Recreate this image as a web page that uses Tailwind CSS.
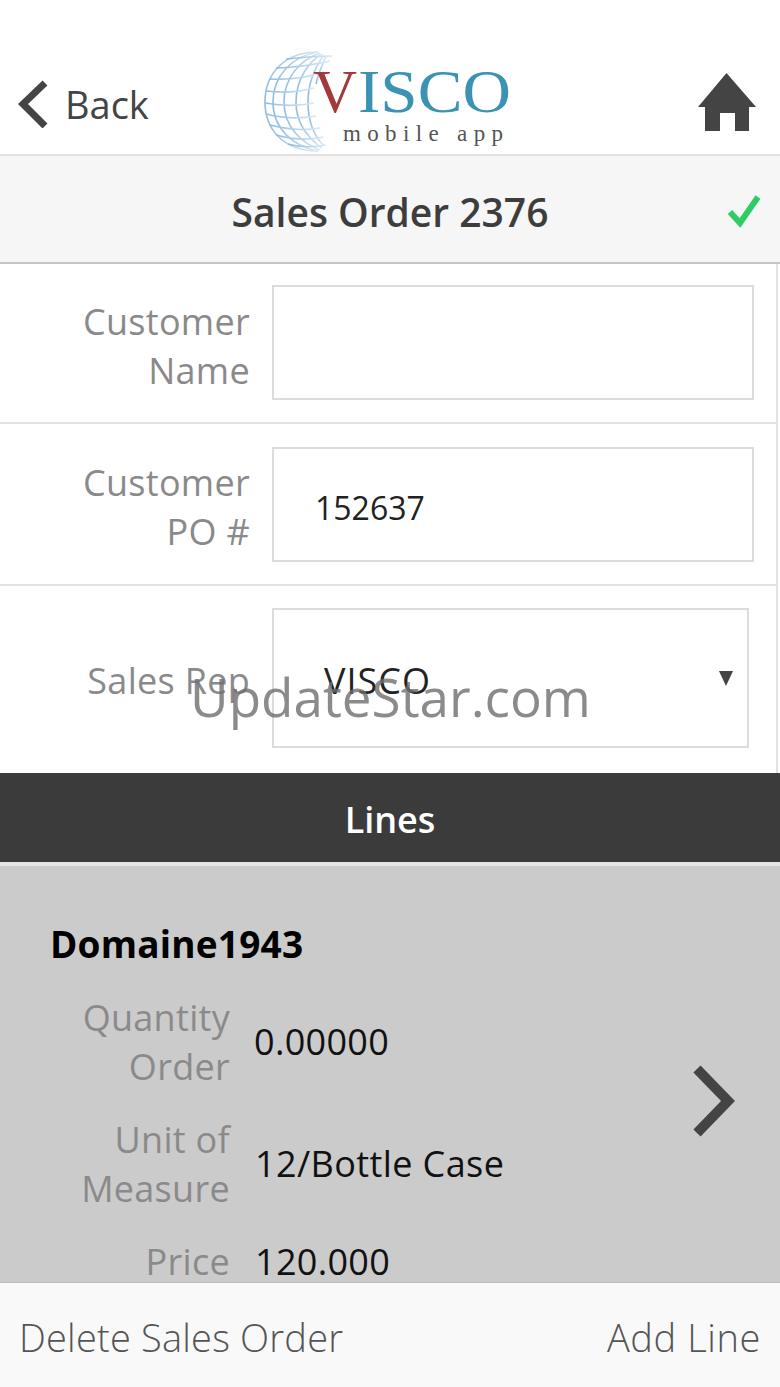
<!DOCTYPE html>
<html lang="en">
<head>
  <meta charset="UTF-8" />
  <title>Sales Order 2376</title>
  <script src="https://cdn.jsdelivr.net/npm/@tailwindcss/browser@4"></script>
</head>
<body class="bg-white font-['Open_Sans',sans-serif]">
<div class="relative w-[780px] h-[1387px] overflow-hidden flex flex-col">

  <!-- Header -->
  <div class="relative h-[156px] shrink-0 border-b-2 border-[#e2e2e2] bg-white">
    <div class="absolute left-[17px] top-[78px] flex items-center text-[#444]">
      <svg width="32" height="48" viewBox="0 0 32 48"><path d="M28 3 L6 24 L28 46" fill="none" stroke="#444" stroke-width="7"/></svg>
      <span class="ml-[16px] text-[38px] leading-[52px]">Back</span>
    </div>
    <svg class="absolute left-[262px] top-[48px]" width="252" height="106" viewBox="0 0 252 106">
      <defs>
        <linearGradient id="globe" x1="0" y1="0" x2="1" y2="0">
          <stop offset="0" stop-color="#8fbce0"/>
          <stop offset="1" stop-color="#dbe9f4"/>
        </linearGradient>
      </defs>
      <g fill="none" stroke="url(#globe)" stroke-width="1.6">
        <path d="M56 4 C22 4 3 26 3 54 C3 82 22 103 56 103"/>
        <path d="M56 4 C30 8 11 28 11 54 C11 80 30 98 56 103"/>
        <path d="M58 5 C38 12 22 30 22 54 C22 78 38 94 58 102"/>
        <path d="M60 6 C46 14 34 32 34 54 C34 76 46 90 60 100"/>
        <path d="M62 7 C54 18 46 34 46 54 C46 72 52 88 62 98"/>
        <path d="M64 8 C60 18 56 26 54 36"/>
        <path d="M24 11 C36 10 52 8 70 8"/>
        <path d="M14 20 C30 20 50 17 68 13"/>
        <path d="M8 31 C24 32 44 30 62 24"/>
        <path d="M4 43 C20 45 38 44 52 40"/>
        <path d="M3 55 C20 58 38 58 52 55"/>
        <path d="M4 66 C20 70 38 71 54 68"/>
        <path d="M8 77 C24 81 42 83 58 80"/>
        <path d="M14 87 C28 91 44 93 62 89"/>
        <path d="M26 96 C36 99 48 100 64 97"/>
      </g>
      <text x="51" y="64" font-family="Liberation Serif" font-size="61" fill="#a33a3a">V</text>
      <text x="96" y="64" font-family="Liberation Serif" font-size="61" fill="#3b93b4" textLength="153" lengthAdjust="spacingAndGlyphs">ISCO</text>
      <text x="81" y="93" font-family="Liberation Serif" font-size="23" fill="#555" textLength="160" lengthAdjust="spacing">mobile app</text>
    </svg>
    <svg class="absolute left-[697px] top-[72px]" width="60" height="60" viewBox="0 0 60 60">
      <path d="M29.5 1 L59 35 L52 35 L52 59 L38 59 L38 41 L23 41 L23 59 L8 59 L8 35 L1 35 Z" fill="#444"/>
    </svg>
  </div>

  <!-- Title -->
  <div class="relative h-[108px] shrink-0 bg-[#f6f6f6] border-b-2 border-[#c6c6c6] flex items-center justify-center pt-[4px]">
    <h1 class="text-[39px] font-semibold text-[#3d3d3d] leading-none">Sales Order 2376</h1>
    <svg class="absolute left-[727px] top-[38px]" width="36" height="34" viewBox="0 0 36 34"><path d="M3 18 L13 29 L31 3" fill="none" stroke="#2ecc63" stroke-width="6"/></svg>
  </div>

  <!-- Form rows -->
  <div class="h-[160px] shrink-0 flex items-center border-b-2 border-r-2 border-[#e2e2e2] w-[778px]">
    <label class="w-[250px] pt-[6px] text-right text-[36px] leading-[49px] text-[#8a8a8a] tracking-[0.3px]">Customer<br>Name</label>
    <div class="ml-[22px] w-[482px] h-[115px] -mt-[2px] border-2 border-[#dcdcdc] bg-white"></div>
  </div>
  <div class="h-[162px] shrink-0 flex items-center border-b-2 border-r-2 border-[#e2e2e2] w-[778px]">
    <label class="w-[250px] pt-[6px] text-right text-[36px] leading-[49px] text-[#8a8a8a] tracking-[0.3px]">Customer<br>PO #</label>
    <div class="ml-[22px] w-[482px] h-[115px] border-2 border-[#dcdcdc] bg-white flex items-center pl-[41px] pt-[8px] text-[32px] text-[#222]">152637</div>
  </div>
  <div class="h-[187px] shrink-0 flex items-center border-r-2 border-[#e2e2e2] w-[778px]">
    <label class="w-[250px] text-right text-[36px] leading-[49px] text-[#8a8a8a] tracking-[0.3px] mt-[2px]">Sales Rep</label>
    <div class="relative ml-[22px] -mt-[4px] w-[477px] h-[140px] border-2 border-[#dcdcdc] bg-white flex items-center pl-[50px] text-[36px] text-[#222] tracking-[1px]">
      <span class="mt-[6px]">VISCO</span>
      <svg class="absolute left-[444px] top-[60px]" width="16" height="16" viewBox="0 0 16 16"><path d="M1 1 L15 1 L8 16 Z" fill="#444"/></svg>
    </div>
  </div>

  <!-- Lines -->
  <div class="h-[89px] shrink-0 bg-[#3b3b3b] flex items-center justify-center pt-[4px] text-[36px] font-semibold text-white">Lines</div>
  <div class="h-[4px] shrink-0 bg-[#e4e4e4]"></div>

  <div class="relative flex-1 bg-[#cbcbcb] overflow-hidden">
    <div class="absolute left-[50px] top-[53px] text-[37px] leading-[49px] font-bold text-black tracking-[0.2px]">Domaine1943</div>
    <div class="absolute left-0 top-[127px] w-[650px] flex flex-col">
      <div class="flex items-center h-[98px]">
        <span class="w-[230px] text-right text-[36px] leading-[49px] text-[#8a8a8a] tracking-[0.3px]">Quantity<br>Order</span>
        <span class="ml-[24px] text-[36px] text-[#111] tracking-[0.3px]">0.00000</span>
      </div>
      <div class="flex items-center h-[98px] mt-[24px]">
        <span class="w-[230px] text-right text-[36px] leading-[49px] text-[#8a8a8a] tracking-[0.3px]">Unit of<br>Measure</span>
        <span class="ml-[25px] text-[36px] text-[#111] tracking-[0.4px]">12/Bottle Case</span>
      </div>
      <div class="flex items-center h-[49px] mt-[24px]">
        <span class="w-[230px] text-right text-[36px] leading-[49px] text-[#8a8a8a] tracking-[0.3px]">Price</span>
        <span class="ml-[25px] text-[36px] leading-[49px] text-[#111] tracking-[0.3px]">120.000</span>
      </div>
    </div>
    <svg class="absolute left-[691px] top-[199px]" width="46" height="72" viewBox="0 0 46 72"><path d="M6 4 L37 36 L6 68" fill="none" stroke="#444" stroke-width="10"/></svg>
  </div>

  <!-- Footer -->
  <div class="h-[105px] shrink-0 bg-[#f9f9f9] border-t border-[#bdbdbd] flex items-center justify-between px-[19px] pt-[4px] text-[38px] font-light text-[#555] tracking-[0.2px]">
    <span>Delete Sales Order</span>
    <span class="tracking-[0.6px]">Add Line</span>
  </div>

  <!-- Watermark -->
  <div class="absolute left-[190px] top-[665px] text-[53px] leading-[64px] text-[#6e6e6e]/80 whitespace-nowrap">UpdateStar.com</div>
</div>
</body>
</html>
